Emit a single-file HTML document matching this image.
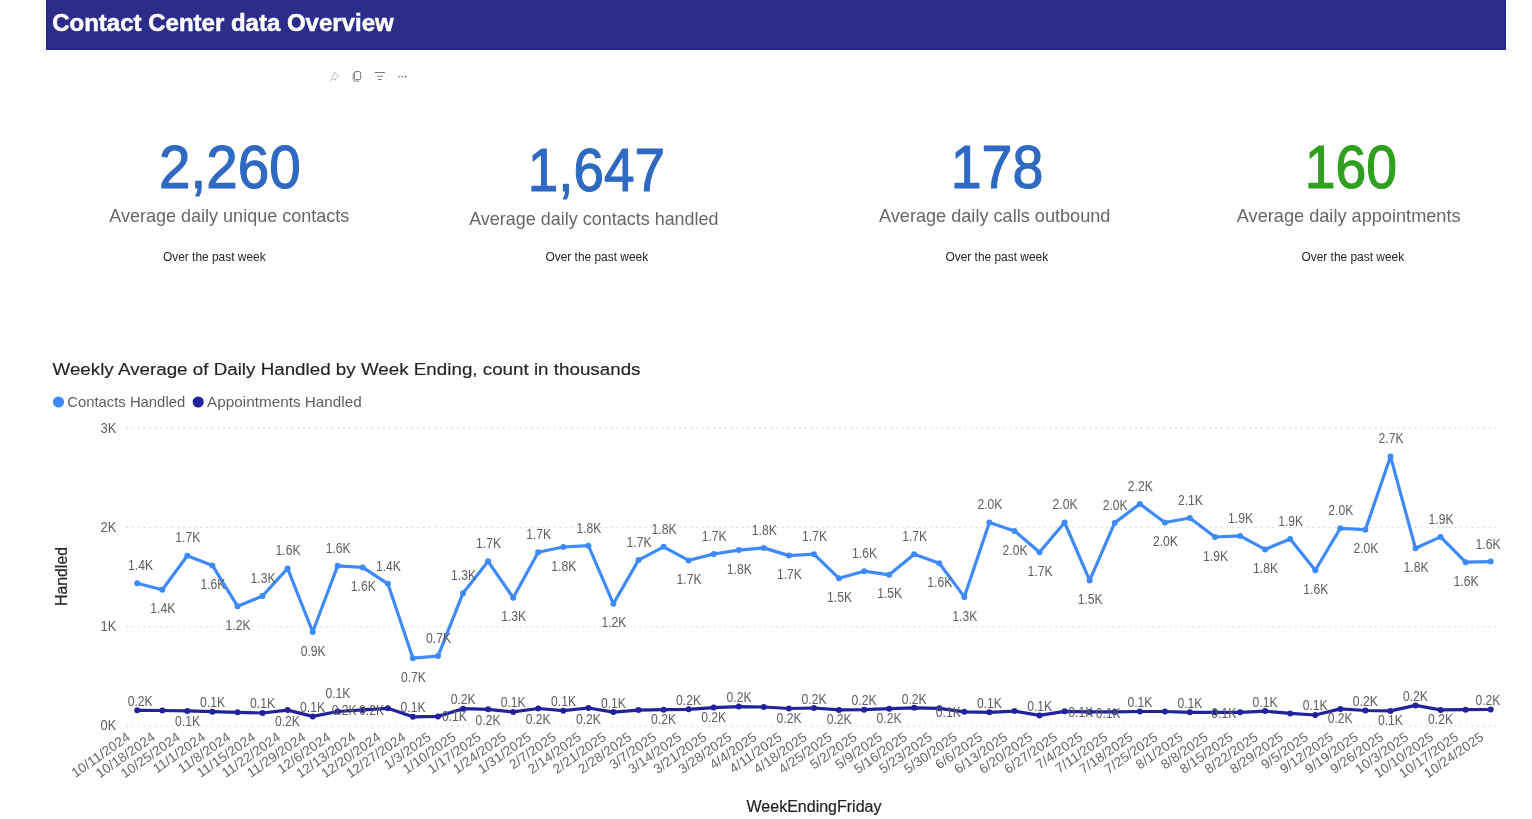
<!DOCTYPE html>
<html lang="en"><head><meta charset="utf-8"><title>Contact Center data Overview</title>
<style>
html,body{margin:0;padding:0;background:#fff;}
body{width:1532px;height:819px;overflow:hidden;position:relative;font-family:"Liberation Sans",sans-serif;}
.header{position:absolute;left:46px;top:0;width:1460px;height:50px;background:#2b2d88;box-sizing:border-box;border:1px solid #23257f;border-top:none;}
svg{position:absolute;left:0;top:0;will-change:transform;font-family:"Liberation Sans",sans-serif;}
.htitle{font-size:24px;font-weight:bold;fill:#fff;stroke:#fff;stroke-width:0.5px;}
.grid{stroke:#c8c8c8;stroke-width:1;stroke-dasharray:1.2 4.5;}
.ytick{font-size:14.2px;fill:#605e5c;}
.l1{fill:none;stroke:#3e8afa;stroke-width:3.2;stroke-linejoin:round;stroke-linecap:round;}
.l2{fill:none;stroke:#22229c;stroke-width:3.2;stroke-linejoin:round;stroke-linecap:round;}
.m1{fill:#3e8afa;} .m2{fill:#22229c;}
.dl text{font-size:14.0px;fill:#605e5c;text-anchor:middle;}
.xl text{font-size:13.5px;fill:#676563;letter-spacing:0.15px;}
.atitle{font-size:16px;fill:#252423;stroke:#252423;stroke-width:0.2px;}
.leg{font-size:14.8px;fill:#605e5c;}
.ctitle{font-size:17.2px;fill:#252423;stroke:#252423;stroke-width:0.15px;}
.knum{font-size:62px;stroke-width:1.2px;stroke-linejoin:round;}
.klab{font-size:18.4px;fill:#666;}
.ksub{font-size:12.8px;fill:#252423;}
</style></head>
<body>
<div class="header"></div>
<svg width="1532" height="819" viewBox="0 0 1532 819">
<text class="htitle" x="52.2" y="31.3" textLength="341.5" lengthAdjust="spacingAndGlyphs">Contact Center data Overview</text>
<g fill="none" stroke-linecap="round" stroke-linejoin="round">
<path d="M334.6 72.2 L338.6 75.7 L336.2 77.6 L335.2 80.2 L331.2 76.5 L333.6 75.6 Z M333.1 78.4 L329.6 81" stroke="#bdbdbd" stroke-width="1"/>
<rect x="354.4" y="71.6" width="6.3" height="8" rx="1.5" stroke="#7a7a7a" stroke-width="1"/>
<path d="M354.2 72.8 Q353.2 73.4 353.2 74.6 L353.2 79.4 Q353.2 81.2 355 81.2 L358.8 81.2" stroke="#8a8a8a" stroke-width="1"/>
<path d="M375.2 72.5 H384.6 M377.2 76.2 H382.6 M378.4 79.5 H381.2" stroke="#7a7a7a" stroke-width="1"/>
</g>
<g fill="#8a8a8a"><circle cx="399.1" cy="76.6" r="0.85"/><circle cx="402.4" cy="76.6" r="0.85"/><circle cx="405.7" cy="76.6" r="0.85" fill="#555"/></g>
<text class="knum" fill="#2f6ac2" stroke="#2f6ac2" x="159.0" y="188.0" textLength="141.6" lengthAdjust="spacingAndGlyphs">2,260</text>
<text class="klab" x="109.2" y="221.8" textLength="240.2" lengthAdjust="spacingAndGlyphs">Average daily unique contacts</text>
<text class="ksub" x="163.0" y="261" textLength="102.6" lengthAdjust="spacingAndGlyphs">Over the past week</text>
<text class="knum" fill="#2f6ac2" stroke="#2f6ac2" x="527.8" y="191.0" textLength="137.1" lengthAdjust="spacingAndGlyphs">1,647</text>
<text class="klab" x="469.2" y="224.8" textLength="249.4" lengthAdjust="spacingAndGlyphs">Average daily contacts handled</text>
<text class="ksub" x="545.4" y="261" textLength="102.8" lengthAdjust="spacingAndGlyphs">Over the past week</text>
<text class="knum" fill="#2f6ac2" stroke="#2f6ac2" x="950.7" y="188.0" textLength="92.7" lengthAdjust="spacingAndGlyphs">178</text>
<text class="klab" x="879.0" y="221.8" textLength="231.4" lengthAdjust="spacingAndGlyphs">Average daily calls outbound</text>
<text class="ksub" x="945.4" y="261" textLength="102.8" lengthAdjust="spacingAndGlyphs">Over the past week</text>
<text class="knum" fill="#2ea01e" stroke="#2ea01e" x="1304.8" y="188.0" textLength="92.3" lengthAdjust="spacingAndGlyphs">160</text>
<text class="klab" x="1236.8" y="221.8" textLength="223.8" lengthAdjust="spacingAndGlyphs">Average daily appointments</text>
<text class="ksub" x="1301.4" y="261" textLength="102.8" lengthAdjust="spacingAndGlyphs">Over the past week</text>
</svg>
<svg class="chart" width="1532" height="819" viewBox="0 0 1532 819">
<line x1="126.7" x2="1497.5" y1="428.1" y2="428.1" class="grid"/>
<line x1="126.7" x2="1497.5" y1="527.4" y2="527.4" class="grid"/>
<line x1="126.7" x2="1497.5" y1="626.7" y2="626.7" class="grid"/>
<line x1="126.7" x2="1497.5" y1="726.0" y2="726.0" class="grid"/>
<text class="ytick" x="100.5" y="432.9" textLength="15.8" lengthAdjust="spacingAndGlyphs">3K</text>
<text class="ytick" x="100.5" y="531.9" textLength="15.8" lengthAdjust="spacingAndGlyphs">2K</text>
<text class="ytick" x="100.5" y="630.9" textLength="15.8" lengthAdjust="spacingAndGlyphs">1K</text>
<text class="ytick" x="100.5" y="729.9" textLength="15.8" lengthAdjust="spacingAndGlyphs">0K</text>
<polyline class="l1" points="137.2,583.2 162.3,589.7 187.3,555.8 212.4,565.4 237.5,606.2 262.5,596.0 287.6,568.4 312.7,632.0 337.7,565.8 362.8,567.4 387.9,583.8 412.9,658.2 438.0,656.1 463.0,593.2 488.1,561.3 513.2,597.7 538.2,552.3 563.3,547.0 588.4,545.7 613.4,603.8 638.5,560.1 663.6,546.8 688.6,560.4 713.7,554.0 738.8,550.1 763.8,547.9 788.9,555.6 814.0,554.2 839.0,578.3 864.1,571.2 889.2,574.8 914.2,554.2 939.3,563.2 964.3,596.9 989.4,522.5 1014.5,530.9 1039.5,552.2 1064.6,522.5 1089.7,580.4 1114.7,522.9 1139.8,503.9 1164.9,522.5 1189.9,518.0 1215.0,537.0 1240.1,535.9 1265.1,549.4 1290.2,538.9 1315.3,570.2 1340.3,528.3 1365.4,529.7 1390.5,456.4 1415.5,548.3 1440.6,536.9 1465.6,562.2 1490.7,561.6"/>
<polyline class="l2" points="137.2,710.3 162.3,710.5 187.3,710.9 212.4,711.7 237.5,712.3 262.5,713.0 287.6,710.1 312.7,716.4 337.7,711.5 362.8,709.9 387.9,708.3 412.9,716.8 438.0,716.4 463.0,708.7 488.1,709.3 513.2,711.9 538.2,708.5 563.3,710.7 588.4,708.0 613.4,712.1 638.5,710.1 663.6,709.7 688.6,709.3 713.7,707.6 738.8,706.6 763.8,707.0 788.9,708.5 814.0,708.0 839.0,709.9 864.1,709.7 889.2,708.7 914.2,707.8 939.3,708.3 964.3,711.8 989.4,712.3 1014.5,711.1 1039.5,715.4 1064.6,711.3 1089.7,711.9 1114.7,711.9 1139.8,711.5 1164.9,711.5 1189.9,712.3 1215.0,712.3 1240.1,712.3 1265.1,711.1 1290.2,713.4 1315.3,715.0 1340.3,708.9 1365.4,710.5 1390.5,710.9 1415.5,705.4 1440.6,709.9 1465.6,709.7 1490.7,709.5"/>
<g class="m1"><circle cx="137.2" cy="583.2" r="3"/><circle cx="162.3" cy="589.7" r="3"/><circle cx="187.3" cy="555.8" r="3"/><circle cx="212.4" cy="565.4" r="3"/><circle cx="237.5" cy="606.2" r="3"/><circle cx="262.5" cy="596.0" r="3"/><circle cx="287.6" cy="568.4" r="3"/><circle cx="312.7" cy="632.0" r="3"/><circle cx="337.7" cy="565.8" r="3"/><circle cx="362.8" cy="567.4" r="3"/><circle cx="387.9" cy="583.8" r="3"/><circle cx="412.9" cy="658.2" r="3"/><circle cx="438.0" cy="656.1" r="3"/><circle cx="463.0" cy="593.2" r="3"/><circle cx="488.1" cy="561.3" r="3"/><circle cx="513.2" cy="597.7" r="3"/><circle cx="538.2" cy="552.3" r="3"/><circle cx="563.3" cy="547.0" r="3"/><circle cx="588.4" cy="545.7" r="3"/><circle cx="613.4" cy="603.8" r="3"/><circle cx="638.5" cy="560.1" r="3"/><circle cx="663.6" cy="546.8" r="3"/><circle cx="688.6" cy="560.4" r="3"/><circle cx="713.7" cy="554.0" r="3"/><circle cx="738.8" cy="550.1" r="3"/><circle cx="763.8" cy="547.9" r="3"/><circle cx="788.9" cy="555.6" r="3"/><circle cx="814.0" cy="554.2" r="3"/><circle cx="839.0" cy="578.3" r="3"/><circle cx="864.1" cy="571.2" r="3"/><circle cx="889.2" cy="574.8" r="3"/><circle cx="914.2" cy="554.2" r="3"/><circle cx="939.3" cy="563.2" r="3"/><circle cx="964.3" cy="596.9" r="3"/><circle cx="989.4" cy="522.5" r="3"/><circle cx="1014.5" cy="530.9" r="3"/><circle cx="1039.5" cy="552.2" r="3"/><circle cx="1064.6" cy="522.5" r="3"/><circle cx="1089.7" cy="580.4" r="3"/><circle cx="1114.7" cy="522.9" r="3"/><circle cx="1139.8" cy="503.9" r="3"/><circle cx="1164.9" cy="522.5" r="3"/><circle cx="1189.9" cy="518.0" r="3"/><circle cx="1215.0" cy="537.0" r="3"/><circle cx="1240.1" cy="535.9" r="3"/><circle cx="1265.1" cy="549.4" r="3"/><circle cx="1290.2" cy="538.9" r="3"/><circle cx="1315.3" cy="570.2" r="3"/><circle cx="1340.3" cy="528.3" r="3"/><circle cx="1365.4" cy="529.7" r="3"/><circle cx="1390.5" cy="456.4" r="3"/><circle cx="1415.5" cy="548.3" r="3"/><circle cx="1440.6" cy="536.9" r="3"/><circle cx="1465.6" cy="562.2" r="3"/><circle cx="1490.7" cy="561.6" r="3"/></g>
<g class="m2"><circle cx="137.2" cy="710.3" r="3"/><circle cx="162.3" cy="710.5" r="3"/><circle cx="187.3" cy="710.9" r="3"/><circle cx="212.4" cy="711.7" r="3"/><circle cx="237.5" cy="712.3" r="3"/><circle cx="262.5" cy="713.0" r="3"/><circle cx="287.6" cy="710.1" r="3"/><circle cx="312.7" cy="716.4" r="3"/><circle cx="337.7" cy="711.5" r="3"/><circle cx="362.8" cy="709.9" r="3"/><circle cx="387.9" cy="708.3" r="3"/><circle cx="412.9" cy="716.8" r="3"/><circle cx="438.0" cy="716.4" r="3"/><circle cx="463.0" cy="708.7" r="3"/><circle cx="488.1" cy="709.3" r="3"/><circle cx="513.2" cy="711.9" r="3"/><circle cx="538.2" cy="708.5" r="3"/><circle cx="563.3" cy="710.7" r="3"/><circle cx="588.4" cy="708.0" r="3"/><circle cx="613.4" cy="712.1" r="3"/><circle cx="638.5" cy="710.1" r="3"/><circle cx="663.6" cy="709.7" r="3"/><circle cx="688.6" cy="709.3" r="3"/><circle cx="713.7" cy="707.6" r="3"/><circle cx="738.8" cy="706.6" r="3"/><circle cx="763.8" cy="707.0" r="3"/><circle cx="788.9" cy="708.5" r="3"/><circle cx="814.0" cy="708.0" r="3"/><circle cx="839.0" cy="709.9" r="3"/><circle cx="864.1" cy="709.7" r="3"/><circle cx="889.2" cy="708.7" r="3"/><circle cx="914.2" cy="707.8" r="3"/><circle cx="939.3" cy="708.3" r="3"/><circle cx="964.3" cy="711.8" r="3"/><circle cx="989.4" cy="712.3" r="3"/><circle cx="1014.5" cy="711.1" r="3"/><circle cx="1039.5" cy="715.4" r="3"/><circle cx="1064.6" cy="711.3" r="3"/><circle cx="1089.7" cy="711.9" r="3"/><circle cx="1114.7" cy="711.9" r="3"/><circle cx="1139.8" cy="711.5" r="3"/><circle cx="1164.9" cy="711.5" r="3"/><circle cx="1189.9" cy="712.3" r="3"/><circle cx="1215.0" cy="712.3" r="3"/><circle cx="1240.1" cy="712.3" r="3"/><circle cx="1265.1" cy="711.1" r="3"/><circle cx="1290.2" cy="713.4" r="3"/><circle cx="1315.3" cy="715.0" r="3"/><circle cx="1340.3" cy="708.9" r="3"/><circle cx="1365.4" cy="710.5" r="3"/><circle cx="1390.5" cy="710.9" r="3"/><circle cx="1415.5" cy="705.4" r="3"/><circle cx="1440.6" cy="709.9" r="3"/><circle cx="1465.6" cy="709.7" r="3"/><circle cx="1490.7" cy="709.5" r="3"/></g>
<g class="dl">
<text x="140.6" y="570.1" textLength="25.0" lengthAdjust="spacingAndGlyphs">1.4K</text>
<text x="162.8" y="613.3" textLength="25.0" lengthAdjust="spacingAndGlyphs">1.4K</text>
<text x="187.8" y="541.5" textLength="25.0" lengthAdjust="spacingAndGlyphs">1.7K</text>
<text x="212.9" y="589.0" textLength="25.0" lengthAdjust="spacingAndGlyphs">1.6K</text>
<text x="238.0" y="629.8" textLength="25.0" lengthAdjust="spacingAndGlyphs">1.2K</text>
<text x="263.0" y="582.9" textLength="25.0" lengthAdjust="spacingAndGlyphs">1.3K</text>
<text x="288.1" y="555.3" textLength="25.0" lengthAdjust="spacingAndGlyphs">1.6K</text>
<text x="313.2" y="655.6" textLength="25.0" lengthAdjust="spacingAndGlyphs">0.9K</text>
<text x="338.2" y="552.7" textLength="25.0" lengthAdjust="spacingAndGlyphs">1.6K</text>
<text x="363.3" y="591.0" textLength="25.0" lengthAdjust="spacingAndGlyphs">1.6K</text>
<text x="388.4" y="570.7" textLength="25.0" lengthAdjust="spacingAndGlyphs">1.4K</text>
<text x="413.4" y="681.8" textLength="25.0" lengthAdjust="spacingAndGlyphs">0.7K</text>
<text x="438.5" y="643.0" textLength="25.0" lengthAdjust="spacingAndGlyphs">0.7K</text>
<text x="463.5" y="580.1" textLength="25.0" lengthAdjust="spacingAndGlyphs">1.3K</text>
<text x="488.6" y="548.2" textLength="25.0" lengthAdjust="spacingAndGlyphs">1.7K</text>
<text x="513.7" y="621.3" textLength="25.0" lengthAdjust="spacingAndGlyphs">1.3K</text>
<text x="538.7" y="539.2" textLength="25.0" lengthAdjust="spacingAndGlyphs">1.7K</text>
<text x="563.8" y="570.6" textLength="25.0" lengthAdjust="spacingAndGlyphs">1.8K</text>
<text x="588.9" y="532.6" textLength="25.0" lengthAdjust="spacingAndGlyphs">1.8K</text>
<text x="613.9" y="627.4" textLength="25.0" lengthAdjust="spacingAndGlyphs">1.2K</text>
<text x="639.0" y="547.0" textLength="25.0" lengthAdjust="spacingAndGlyphs">1.7K</text>
<text x="664.1" y="533.7" textLength="25.0" lengthAdjust="spacingAndGlyphs">1.8K</text>
<text x="689.1" y="584.0" textLength="25.0" lengthAdjust="spacingAndGlyphs">1.7K</text>
<text x="714.2" y="540.9" textLength="25.0" lengthAdjust="spacingAndGlyphs">1.7K</text>
<text x="739.3" y="573.7" textLength="25.0" lengthAdjust="spacingAndGlyphs">1.8K</text>
<text x="764.3" y="534.8" textLength="25.0" lengthAdjust="spacingAndGlyphs">1.8K</text>
<text x="789.4" y="579.2" textLength="25.0" lengthAdjust="spacingAndGlyphs">1.7K</text>
<text x="814.5" y="541.1" textLength="25.0" lengthAdjust="spacingAndGlyphs">1.7K</text>
<text x="839.5" y="601.9" textLength="25.0" lengthAdjust="spacingAndGlyphs">1.5K</text>
<text x="864.6" y="558.1" textLength="25.0" lengthAdjust="spacingAndGlyphs">1.6K</text>
<text x="889.7" y="598.4" textLength="25.0" lengthAdjust="spacingAndGlyphs">1.5K</text>
<text x="914.7" y="541.1" textLength="25.0" lengthAdjust="spacingAndGlyphs">1.7K</text>
<text x="939.8" y="586.8" textLength="25.0" lengthAdjust="spacingAndGlyphs">1.6K</text>
<text x="964.8" y="620.5" textLength="25.0" lengthAdjust="spacingAndGlyphs">1.3K</text>
<text x="989.9" y="509.4" textLength="25.0" lengthAdjust="spacingAndGlyphs">2.0K</text>
<text x="1015.0" y="554.5" textLength="25.0" lengthAdjust="spacingAndGlyphs">2.0K</text>
<text x="1040.0" y="575.8" textLength="25.0" lengthAdjust="spacingAndGlyphs">1.7K</text>
<text x="1065.1" y="509.4" textLength="25.0" lengthAdjust="spacingAndGlyphs">2.0K</text>
<text x="1090.2" y="604.0" textLength="25.0" lengthAdjust="spacingAndGlyphs">1.5K</text>
<text x="1115.2" y="509.8" textLength="25.0" lengthAdjust="spacingAndGlyphs">2.0K</text>
<text x="1140.3" y="490.8" textLength="25.0" lengthAdjust="spacingAndGlyphs">2.2K</text>
<text x="1165.4" y="546.1" textLength="25.0" lengthAdjust="spacingAndGlyphs">2.0K</text>
<text x="1190.4" y="504.9" textLength="25.0" lengthAdjust="spacingAndGlyphs">2.1K</text>
<text x="1215.5" y="560.6" textLength="25.0" lengthAdjust="spacingAndGlyphs">1.9K</text>
<text x="1240.6" y="522.8" textLength="25.0" lengthAdjust="spacingAndGlyphs">1.9K</text>
<text x="1265.6" y="573.0" textLength="25.0" lengthAdjust="spacingAndGlyphs">1.8K</text>
<text x="1290.7" y="525.8" textLength="25.0" lengthAdjust="spacingAndGlyphs">1.9K</text>
<text x="1315.8" y="593.8" textLength="25.0" lengthAdjust="spacingAndGlyphs">1.6K</text>
<text x="1340.8" y="515.2" textLength="25.0" lengthAdjust="spacingAndGlyphs">2.0K</text>
<text x="1365.9" y="553.3" textLength="25.0" lengthAdjust="spacingAndGlyphs">2.0K</text>
<text x="1391.0" y="443.3" textLength="25.0" lengthAdjust="spacingAndGlyphs">2.7K</text>
<text x="1416.0" y="571.9" textLength="25.0" lengthAdjust="spacingAndGlyphs">1.8K</text>
<text x="1441.1" y="523.8" textLength="25.0" lengthAdjust="spacingAndGlyphs">1.9K</text>
<text x="1466.1" y="585.8" textLength="25.0" lengthAdjust="spacingAndGlyphs">1.6K</text>
<text x="1488.0" y="548.5" textLength="25.0" lengthAdjust="spacingAndGlyphs">1.6K</text>
<text x="140.2" y="706.0" textLength="25.0" lengthAdjust="spacingAndGlyphs">0.2K</text>
<text x="187.6" y="725.6" textLength="25.0" lengthAdjust="spacingAndGlyphs">0.1K</text>
<text x="212.6" y="707.0" textLength="25.0" lengthAdjust="spacingAndGlyphs">0.1K</text>
<text x="262.5" y="708.0" textLength="25.0" lengthAdjust="spacingAndGlyphs">0.1K</text>
<text x="287.4" y="725.6" textLength="25.0" lengthAdjust="spacingAndGlyphs">0.2K</text>
<text x="312.5" y="712.3" textLength="25.0" lengthAdjust="spacingAndGlyphs">0.1K</text>
<text x="337.9" y="698.2" textLength="25.0" lengthAdjust="spacingAndGlyphs">0.1K</text>
<text x="344.2" y="715.2" textLength="25.0" lengthAdjust="spacingAndGlyphs">0.2K</text>
<text x="371.6" y="715.2" textLength="25.0" lengthAdjust="spacingAndGlyphs">0.2K</text>
<text x="413.0" y="711.9" textLength="25.0" lengthAdjust="spacingAndGlyphs">0.1K</text>
<text x="454.4" y="721.1" textLength="25.0" lengthAdjust="spacingAndGlyphs">0.1K</text>
<text x="463.2" y="704.4" textLength="25.0" lengthAdjust="spacingAndGlyphs">0.2K</text>
<text x="488.1" y="724.6" textLength="25.0" lengthAdjust="spacingAndGlyphs">0.2K</text>
<text x="513.2" y="707.0" textLength="25.0" lengthAdjust="spacingAndGlyphs">0.1K</text>
<text x="538.2" y="723.6" textLength="25.0" lengthAdjust="spacingAndGlyphs">0.2K</text>
<text x="563.5" y="706.0" textLength="25.0" lengthAdjust="spacingAndGlyphs">0.1K</text>
<text x="588.4" y="723.6" textLength="25.0" lengthAdjust="spacingAndGlyphs">0.2K</text>
<text x="613.4" y="708.0" textLength="25.0" lengthAdjust="spacingAndGlyphs">0.1K</text>
<text x="663.6" y="724.2" textLength="25.0" lengthAdjust="spacingAndGlyphs">0.2K</text>
<text x="688.6" y="705.0" textLength="25.0" lengthAdjust="spacingAndGlyphs">0.2K</text>
<text x="713.7" y="722.3" textLength="25.0" lengthAdjust="spacingAndGlyphs">0.2K</text>
<text x="739.1" y="702.1" textLength="25.0" lengthAdjust="spacingAndGlyphs">0.2K</text>
<text x="789.1" y="723.2" textLength="25.0" lengthAdjust="spacingAndGlyphs">0.2K</text>
<text x="814.1" y="704.0" textLength="25.0" lengthAdjust="spacingAndGlyphs">0.2K</text>
<text x="839.2" y="724.2" textLength="25.0" lengthAdjust="spacingAndGlyphs">0.2K</text>
<text x="864.1" y="705.0" textLength="25.0" lengthAdjust="spacingAndGlyphs">0.2K</text>
<text x="889.1" y="723.2" textLength="25.0" lengthAdjust="spacingAndGlyphs">0.2K</text>
<text x="914.2" y="704.0" textLength="25.0" lengthAdjust="spacingAndGlyphs">0.2K</text>
<text x="948.3" y="717.2" textLength="25.0" lengthAdjust="spacingAndGlyphs">0.1K</text>
<text x="989.4" y="708.0" textLength="25.0" lengthAdjust="spacingAndGlyphs">0.1K</text>
<text x="1039.7" y="710.9" textLength="25.0" lengthAdjust="spacingAndGlyphs">0.1K</text>
<text x="1080.8" y="717.2" textLength="25.0" lengthAdjust="spacingAndGlyphs">0.1K</text>
<text x="1108.2" y="718.1" textLength="25.0" lengthAdjust="spacingAndGlyphs">0.1K</text>
<text x="1139.9" y="707.0" textLength="25.0" lengthAdjust="spacingAndGlyphs">0.1K</text>
<text x="1189.9" y="708.0" textLength="25.0" lengthAdjust="spacingAndGlyphs">0.1K</text>
<text x="1223.8" y="718.1" textLength="25.0" lengthAdjust="spacingAndGlyphs">0.1K</text>
<text x="1265.0" y="707.0" textLength="25.0" lengthAdjust="spacingAndGlyphs">0.1K</text>
<text x="1315.2" y="709.9" textLength="25.0" lengthAdjust="spacingAndGlyphs">0.1K</text>
<text x="1340.2" y="723.2" textLength="25.0" lengthAdjust="spacingAndGlyphs">0.2K</text>
<text x="1365.3" y="705.6" textLength="25.0" lengthAdjust="spacingAndGlyphs">0.2K</text>
<text x="1390.4" y="725.0" textLength="25.0" lengthAdjust="spacingAndGlyphs">0.1K</text>
<text x="1415.4" y="700.7" textLength="25.0" lengthAdjust="spacingAndGlyphs">0.2K</text>
<text x="1440.5" y="724.2" textLength="25.0" lengthAdjust="spacingAndGlyphs">0.2K</text>
<text x="1487.9" y="705.0" textLength="25.0" lengthAdjust="spacingAndGlyphs">0.2K</text>
</g>
<g class="xl">
<text transform="translate(131.2,739.0) rotate(-35)" text-anchor="end">10/11/2024</text>
<text transform="translate(156.3,739.0) rotate(-35)" text-anchor="end">10/18/2024</text>
<text transform="translate(181.3,739.0) rotate(-35)" text-anchor="end">10/25/2024</text>
<text transform="translate(206.4,739.0) rotate(-35)" text-anchor="end">11/1/2024</text>
<text transform="translate(231.5,739.0) rotate(-35)" text-anchor="end">11/8/2024</text>
<text transform="translate(256.5,739.0) rotate(-35)" text-anchor="end">11/15/2024</text>
<text transform="translate(281.6,739.0) rotate(-35)" text-anchor="end">11/22/2024</text>
<text transform="translate(306.7,739.0) rotate(-35)" text-anchor="end">11/29/2024</text>
<text transform="translate(331.7,739.0) rotate(-35)" text-anchor="end">12/6/2024</text>
<text transform="translate(356.8,739.0) rotate(-35)" text-anchor="end">12/13/2024</text>
<text transform="translate(381.9,739.0) rotate(-35)" text-anchor="end">12/20/2024</text>
<text transform="translate(406.9,739.0) rotate(-35)" text-anchor="end">12/27/2024</text>
<text transform="translate(432.0,739.0) rotate(-35)" text-anchor="end">1/3/2025</text>
<text transform="translate(457.0,739.0) rotate(-35)" text-anchor="end">1/10/2025</text>
<text transform="translate(482.1,739.0) rotate(-35)" text-anchor="end">1/17/2025</text>
<text transform="translate(507.2,739.0) rotate(-35)" text-anchor="end">1/24/2025</text>
<text transform="translate(532.2,739.0) rotate(-35)" text-anchor="end">1/31/2025</text>
<text transform="translate(557.3,739.0) rotate(-35)" text-anchor="end">2/7/2025</text>
<text transform="translate(582.4,739.0) rotate(-35)" text-anchor="end">2/14/2025</text>
<text transform="translate(607.4,739.0) rotate(-35)" text-anchor="end">2/21/2025</text>
<text transform="translate(632.5,739.0) rotate(-35)" text-anchor="end">2/28/2025</text>
<text transform="translate(657.6,739.0) rotate(-35)" text-anchor="end">3/7/2025</text>
<text transform="translate(682.6,739.0) rotate(-35)" text-anchor="end">3/14/2025</text>
<text transform="translate(707.7,739.0) rotate(-35)" text-anchor="end">3/21/2025</text>
<text transform="translate(732.8,739.0) rotate(-35)" text-anchor="end">3/28/2025</text>
<text transform="translate(757.8,739.0) rotate(-35)" text-anchor="end">4/4/2025</text>
<text transform="translate(782.9,739.0) rotate(-35)" text-anchor="end">4/11/2025</text>
<text transform="translate(808.0,739.0) rotate(-35)" text-anchor="end">4/18/2025</text>
<text transform="translate(833.0,739.0) rotate(-35)" text-anchor="end">4/25/2025</text>
<text transform="translate(858.1,739.0) rotate(-35)" text-anchor="end">5/2/2025</text>
<text transform="translate(883.2,739.0) rotate(-35)" text-anchor="end">5/9/2025</text>
<text transform="translate(908.2,739.0) rotate(-35)" text-anchor="end">5/16/2025</text>
<text transform="translate(933.3,739.0) rotate(-35)" text-anchor="end">5/23/2025</text>
<text transform="translate(958.3,739.0) rotate(-35)" text-anchor="end">5/30/2025</text>
<text transform="translate(983.4,739.0) rotate(-35)" text-anchor="end">6/6/2025</text>
<text transform="translate(1008.5,739.0) rotate(-35)" text-anchor="end">6/13/2025</text>
<text transform="translate(1033.5,739.0) rotate(-35)" text-anchor="end">6/20/2025</text>
<text transform="translate(1058.6,739.0) rotate(-35)" text-anchor="end">6/27/2025</text>
<text transform="translate(1083.7,739.0) rotate(-35)" text-anchor="end">7/4/2025</text>
<text transform="translate(1108.7,739.0) rotate(-35)" text-anchor="end">7/11/2025</text>
<text transform="translate(1133.8,739.0) rotate(-35)" text-anchor="end">7/18/2025</text>
<text transform="translate(1158.9,739.0) rotate(-35)" text-anchor="end">7/25/2025</text>
<text transform="translate(1183.9,739.0) rotate(-35)" text-anchor="end">8/1/2025</text>
<text transform="translate(1209.0,739.0) rotate(-35)" text-anchor="end">8/8/2025</text>
<text transform="translate(1234.1,739.0) rotate(-35)" text-anchor="end">8/15/2025</text>
<text transform="translate(1259.1,739.0) rotate(-35)" text-anchor="end">8/22/2025</text>
<text transform="translate(1284.2,739.0) rotate(-35)" text-anchor="end">8/29/2025</text>
<text transform="translate(1309.3,739.0) rotate(-35)" text-anchor="end">9/5/2025</text>
<text transform="translate(1334.3,739.0) rotate(-35)" text-anchor="end">9/12/2025</text>
<text transform="translate(1359.4,739.0) rotate(-35)" text-anchor="end">9/19/2025</text>
<text transform="translate(1384.5,739.0) rotate(-35)" text-anchor="end">9/26/2025</text>
<text transform="translate(1409.5,739.0) rotate(-35)" text-anchor="end">10/3/2025</text>
<text transform="translate(1434.6,739.0) rotate(-35)" text-anchor="end">10/10/2025</text>
<text transform="translate(1459.6,739.0) rotate(-35)" text-anchor="end">10/17/2025</text>
<text transform="translate(1484.7,739.0) rotate(-35)" text-anchor="end">10/24/2025</text>
</g>
<text class="atitle" x="814" y="811.8" text-anchor="middle" textLength="135" lengthAdjust="spacingAndGlyphs">WeekEndingFriday</text>
<text class="atitle" transform="translate(67,576.5) rotate(-90)" text-anchor="middle" textLength="59" lengthAdjust="spacingAndGlyphs">Handled</text>
<circle cx="58.5" cy="402" r="5.6" fill="#3e8afa"/><circle cx="198.2" cy="402" r="5.6" fill="#22229c"/>
<text class="leg" x="67.2" y="407" textLength="118" lengthAdjust="spacingAndGlyphs">Contacts Handled</text>
<text class="leg" x="207.1" y="407" textLength="154.6" lengthAdjust="spacingAndGlyphs">Appointments Handled</text>
<text class="ctitle" x="52.5" y="375.2" textLength="588" lengthAdjust="spacingAndGlyphs">Weekly Average of Daily Handled by Week Ending, count in thousands</text>
</svg>
</body></html>
